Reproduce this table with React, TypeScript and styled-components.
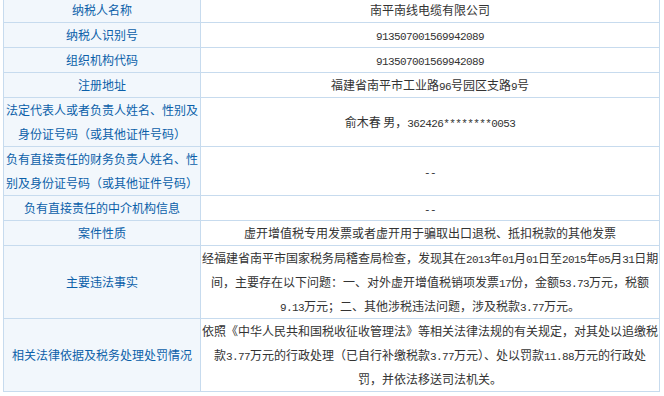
import React from 'react';
import styled, { createGlobalStyle } from 'styled-components';

const GlobalStyle = createGlobalStyle`
  html, body {
    margin: 0;
    padding: 0;
    background: #ffffff;
  }
  body {
    font-family: 'Noto Sans CJK SC', 'Noto Sans', sans-serif;
    font-size: 12px;
  }
`;

const Page = styled.div`
  width: 664px;
  height: 396px;
  overflow: hidden;
  padding-left: 3px;
  box-sizing: border-box;
`;

const InfoTable = styled.table`
  margin-top: -3px;
  width: 657px;
  border-collapse: collapse;
  table-layout: fixed;
`;

const Label = styled.th`
  padding: 0 1px;
  border: 1px solid #c7dbee;
  background: #f2f7fc;
  color: #0b5fa9;
  font-weight: normal;
  font-size: 12px;
  text-align: center;
  vertical-align: middle;
  white-space: nowrap;
`;

const Value = styled.td<{ top?: boolean }>`
  padding: 0 1px;
  border: 1px solid #c7dbee;
  background: #ffffff;
  color: #333333;
  font-size: 12px;
  text-align: center;
  vertical-align: ${(p) => (p.top ? 'top' : 'middle')};
  white-space: nowrap;
`;

// one text line of fixed height so mixed fonts don't stretch rows
const Line = styled.span`
  display: block;
  height: 24px;
  line-height: 24px;
  overflow: visible;
`;

// SimSun-like narrow latin run
const Num = styled.span`
  font-family: 'Liberation Mono', 'DejaVu Sans Mono', monospace;
  font-size: 11px;
  letter-spacing: -0.6px;
  line-height: 0;
`;

type Row = { label: React.ReactNode[]; value: React.ReactNode[]; top?: boolean };

const rows: Row[] = [
  { label: ['纳税人名称'], value: ['南平南线电缆有限公司'] },
  { label: ['纳税人识别号'], value: [<Num>913507001569942089</Num>] },
  { label: ['组织机构代码'], value: [<Num>913507001569942089</Num>] },
  {
    label: ['注册地址'],
    value: [
      <>
        福建省南平市工业路<Num>96</Num>号园区支路<Num>9</Num>号
      </>,
    ],
  },
  {
    label: ['法定代表人或者负责人姓名、性别及', '身份证号码（或其他证件号码）'],
    value: [
      <>
        俞木春 男，<Num>362426********0053</Num>
      </>,
    ],
  },
  {
    label: ['负有直接责任的财务负责人姓名、性', '别及身份证号码（或其他证件号码）'],
    value: [<Num>--</Num>],
  },
  { label: ['负有直接责任的中介机构信息'], value: [<Num>--</Num>] },
  {
    label: ['案件性质'],
    value: ['虚开增值税专用发票或者虚开用于骗取出口退税、抵扣税款的其他发票'],
  },
  {
    label: ['主要违法事实'],
    top: true,
    value: [
      <>
        经福建省南平市国家税务局稽查局检查，发现其在<Num>2013</Num>年<Num>01</Num>月<Num>01</Num>日至
        <Num>2015</Num>年<Num>05</Num>月<Num>31</Num>日期
      </>,
      <>
        间，主要存在以下问题：一、对外虚开增值税销项发票<Num>17</Num>份，金额<Num>53.73</Num>万元，税额
      </>,
      <>
        <Num>9.13</Num>万元；二、其他涉税违法问题，涉及税款<Num>3.77</Num>万元。
      </>,
    ],
  },
  {
    label: ['相关法律依据及税务处理处罚情况'],
    top: true,
    value: [
      '依照《中华人民共和国税收征收管理法》等相关法律法规的有关规定，对其处以追缴税',
      <>
        款<Num>3.77</Num>万元的行政处理（已自行补缴税款<Num>3.77</Num>万元）、处以罚款<Num>11.88</Num>万元的行政处
      </>,
      '罚，并依法移送司法机关。',
    ],
  },
];

function App() {
  return (
    <Page>
      <GlobalStyle />
      <InfoTable>
        <colgroup>
          <col style={{ width: 197 }} />
          <col />
        </colgroup>
        <tbody>
          {rows.map((row, i) => (
            <tr key={i}>
              <Label>
                {row.label.map((l, j) => (
                  <Line key={j}>{l}</Line>
                ))}
              </Label>
              <Value top={row.top}>
                {row.value.map((v, j) => (
                  <Line key={j}>{v}</Line>
                ))}
              </Value>
            </tr>
          ))}
        </tbody>
      </InfoTable>
    </Page>
  );
}

export default App;
